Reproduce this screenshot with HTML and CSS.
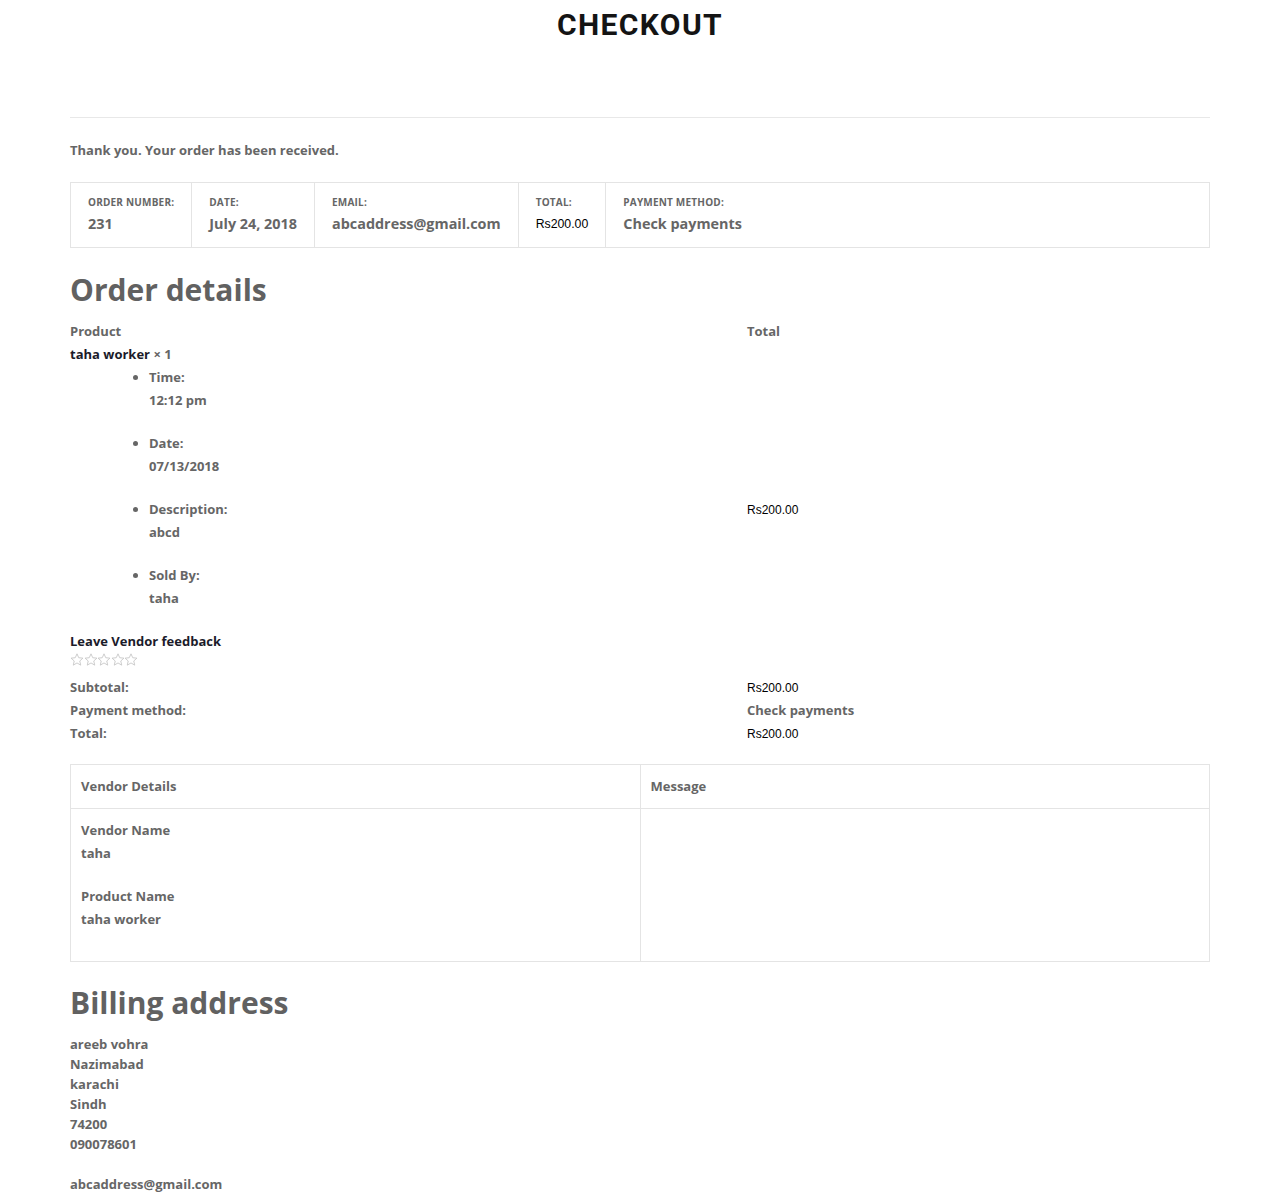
FILE: index.html
```html
<!DOCTYPE html>
<html lang="en">
<head>
<meta charset="utf-8">
<title>Checkout</title>
<link rel="stylesheet" href="styles.css">
</head>
<body>
<div class="page">
  <header class="page-header">
    <h1 class="page-title">CHECKOUT</h1>
  </header>

  <p class="thanks">Thank you. Your order has been received.</p>

  <ul class="overview">
    <li class="ov-item">
      <span class="ov-label">Order number:</span>
      <strong class="ov-value">231</strong>
    </li>
    <li class="ov-item">
      <span class="ov-label">Date:</span>
      <strong class="ov-value">July 24, 2018</strong>
    </li>
    <li class="ov-item">
      <span class="ov-label">Email:</span>
      <strong class="ov-value">abcaddress@gmail.com</strong>
    </li>
    <li class="ov-item">
      <span class="ov-label">Total:</span>
      <strong class="ov-value money">Rs200.00</strong>
    </li>
    <li class="ov-item ov-last">
      <span class="ov-label">Payment method:</span>
      <strong class="ov-value">Check payments</strong>
    </li>
  </ul>

  <h2 class="section-title">Order details</h2>

  <table class="details">
    <thead>
      <tr>
        <th class="col-product">Product</th>
        <th class="col-total">Total</th>
      </tr>
    </thead>
    <tbody>
      <tr>
        <td class="col-product">
          <div class="product-name"><span class="dark">taha worker</span> × 1</div>
          <ul class="meta">
            <li><div class="meta-key">Time:</div><p class="meta-val">12:12 pm</p></li>
            <li><div class="meta-key">Date:</div><p class="meta-val">07/13/2018</p></li>
            <li><div class="meta-key">Description:</div><p class="meta-val">abcd</p></li>
            <li><div class="meta-key">Sold By:</div><p class="meta-val">taha</p></li>
          </ul>
          <div class="feedback dark">Leave Vendor feedback</div>
          <div class="stars">
            <svg width="14" height="13" viewBox="0 0 24 23"><path d="M12 1.5l3.1 6.9 7.4.7-5.6 5 1.7 7.4L12 17.6l-6.6 3.9 1.7-7.4-5.6-5 7.4-.7z" fill="none" stroke="#c8c8c8" stroke-width="1.6" stroke-linejoin="round"/></svg>
            <svg width="14" height="13" viewBox="0 0 24 23"><path d="M12 1.5l3.1 6.9 7.4.7-5.6 5 1.7 7.4L12 17.6l-6.6 3.9 1.7-7.4-5.6-5 7.4-.7z" fill="none" stroke="#c8c8c8" stroke-width="1.6" stroke-linejoin="round"/></svg>
            <svg width="14" height="13" viewBox="0 0 24 23"><path d="M12 1.5l3.1 6.9 7.4.7-5.6 5 1.7 7.4L12 17.6l-6.6 3.9 1.7-7.4-5.6-5 7.4-.7z" fill="none" stroke="#c8c8c8" stroke-width="1.6" stroke-linejoin="round"/></svg>
            <svg width="14" height="13" viewBox="0 0 24 23"><path d="M12 1.5l3.1 6.9 7.4.7-5.6 5 1.7 7.4L12 17.6l-6.6 3.9 1.7-7.4-5.6-5 7.4-.7z" fill="none" stroke="#c8c8c8" stroke-width="1.6" stroke-linejoin="round"/></svg>
            <svg width="14" height="13" viewBox="0 0 24 23"><path d="M12 1.5l3.1 6.9 7.4.7-5.6 5 1.7 7.4L12 17.6l-6.6 3.9 1.7-7.4-5.6-5 7.4-.7z" fill="none" stroke="#c8c8c8" stroke-width="1.6" stroke-linejoin="round"/></svg>
          </div>
        </td>
        <td class="col-total mid"><span class="money">Rs200.00</span></td>
      </tr>
    </tbody>
    <tfoot>
      <tr><th class="col-product">Subtotal:</th><td class="col-total"><span class="money">Rs200.00</span></td></tr>
      <tr><th class="col-product">Payment method:</th><td class="col-total">Check payments</td></tr>
      <tr><th class="col-product">Total:</th><td class="col-total"><span class="money">Rs200.00</span></td></tr>
    </tfoot>
  </table>

  <table class="vendor">
    <thead>
      <tr><th>Vendor Details</th><th>Message</th></tr>
    </thead>
    <tbody>
      <tr>
        <td>
          <div>Vendor Name</div>
          <p class="v-val">taha</p>
          <div>Product Name</div>
          <p class="v-val">taha worker</p>
        </td>
        <td></td>
      </tr>
    </tbody>
  </table>

  <h2 class="section-title billing-title">Billing address</h2>
  <address class="address">
    areeb vohra<br>
    Nazimabad<br>
    karachi<br>
    Sindh<br>
    74200<br>
    090078601<br>
    <br>
    abcaddress@gmail.com
  </address>
</div>
</body>
</html>
```

FILE: styles.css
```css
html, body {
  margin: 0;
  padding: 0;
  background: #fff;
}

body {
  font-family: "Open Sans", "Noto Sans", sans-serif;
  font-size: 13px;
  font-weight: 700;
  color: #666;
}

.page {
  width: 1140px;
  margin: 0 auto;
}

.page-header {
  height: 117px;
  border-bottom: 1px solid #e8e8e8;
}

.page-title {
  margin: 0;
  text-align: center;
  font-family: Roboto, "Liberation Sans", sans-serif;
  font-weight: 700;
  font-size: 30px;
  line-height: 50px;
  letter-spacing: 1.4px;
  color: #141414;
}

.thanks {
  margin: 22px 0 22px;
  line-height: 20px;
}

.overview {
  list-style: none;
  margin: 0;
  padding: 0;
  display: flex;
  border: 1px solid #e4e4e4;
}

.ov-item {
  display: flex;
  flex-direction: column;
  padding: 11px 17px 9px 17px;
  border-right: 1px solid #e4e4e4;
}

.ov-last {
  border-right: 0;
  flex: 1;
}

.ov-label {
  font-size: 10px;
  line-height: 16px;
  text-transform: uppercase;
  letter-spacing: 0.2px;
}

.ov-value {
  font-size: 14.4px;
  line-height: 28px;
  font-weight: 700;
}

.money {
  font-family: "Liberation Sans", Arial, sans-serif;
  font-size: 12px;
  font-weight: 400;
  color: #000;
}

.details .money {
  line-height: 12px;
}

.ov-value.money {
  font-size: 12.3px;
}

.section-title {
  margin: 24px 0 12px;
  font-size: 30px;
  line-height: 36px;
  font-weight: 700;
  color: #616161;
}

.details {
  width: 100%;
  border-collapse: collapse;
}

.details th,
.details td {
  padding: 0;
  text-align: left;
  vertical-align: top;
  line-height: 23px;
  font-weight: 700;
}

.details .col-product {
  width: 677px;
}

.details td.mid {
  vertical-align: middle;
}

.dark {
  color: #1b1b2a;
}

.meta {
  margin: 0;
  padding: 0 0 0 79px;
  list-style: disc;
}

.meta li {
  margin-bottom: 20px;
}

.meta-val {
  margin: 0;
}

.feedback {
  margin-top: 10px;
}

.stars {
  display: flex;
  height: 17px;
  align-items: flex-start;
  margin-bottom: 6px;
}

.stars svg {
  display: block;
  margin-right: -0.4px;
}

.vendor {
  width: 100%;
  margin-top: 19px;
  border-collapse: collapse;
  border: 1px solid #e4e4e4;
}

.vendor th,
.vendor td {
  width: 50%;
  border: 1px solid #e4e4e4;
  text-align: left;
  vertical-align: top;
  padding: 10px 10px;
  line-height: 23px;
  font-weight: 700;
}

.v-val {
  margin: 0 0 20px;
}

.billing-title {
  margin: 23px 0 13px;
}

.address {
  font-style: normal;
  line-height: 20px;
}
```
